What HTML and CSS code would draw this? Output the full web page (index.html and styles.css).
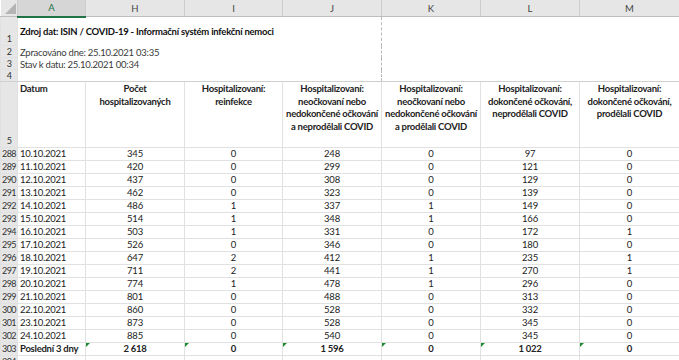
FILE: index.html
```html
<!DOCTYPE html>
<html lang="cs">
<head>
    <meta charset="UTF-8">
    <meta name="viewport" content="width=device-width, initial-scale=1.0">
    <title>Hospitalizovaní - ISIN</title>
    <link rel="stylesheet" href="styles.css">
</head>
<body>

<table class="sheet">
    <colgroup>
        <col class="w-row">
        <col class="w-a">
        <col class="w-h">
        <col class="w-i">
        <col class="w-j">
        <col class="w-k">
        <col class="w-l">
        <col class="w-m">
    </colgroup>
    <thead>
        <tr class="col-heads">
            <th class="corner">
                <svg width="17" height="16" viewBox="0 0 17 16"><polygon points="15,3 15,14 4,14" fill="#b4b4b4"/></svg>
            </th>
            <th class="active">A</th>
            <th>H</th>
            <th>I</th>
            <th>J</th>
            <th>K</th>
            <th>L</th>
            <th>M</th>
        </tr>
    </thead>
    <tbody>
        <tr class="r1">
            <th>1</th>
            <td colspan="4" class="top title">Zdroj dat: ISIN / COVID-19 - Informační systém infekční nemoci</td>
            <td colspan="3" class="top"></td>
        </tr>
        <tr class="r-small">
            <th>2</th>
            <td colspan="4" class="top note">Zpracováno dne: 25.10.2021 03:35</td>
            <td colspan="3" class="top"></td>
        </tr>
        <tr class="r-small">
            <th>3</th>
            <td colspan="4" class="top note">Stav k datu: 25.10.2021 00:34</td>
            <td colspan="3" class="top"></td>
        </tr>
        <tr class="r-small r4">
            <th>4</th>
            <td colspan="4" class="top"></td>
            <td colspan="3" class="top"></td>
        </tr>
        <tr class="r-head">
            <th>5</th>
            <td class="left">Datum</td>
            <td>Počet<br>hospitalizovaných</td>
            <td>Hospitalizovaní:<br>reinfekce</td>
            <td class="brk">Hospitalizovaní:<br>neočkovaní nebo<br>nedokončené očkování<br>a neprodělali COVID</td>
            <td>Hospitalizovaní:<br>neočkovaní nebo<br>nedokončené očkování<br>a prodělali COVID</td>
            <td>Hospitalizovaní:<br>dokončené očkování,<br>neprodělali COVID</td>
            <td class="brk">Hospitalizovaní:<br>dokončené očkování,<br>prodělali COVID</td>
        </tr>
        <tr><th>288</th><td class="left">10.10.2021</td><td>345</td><td>0</td><td class="brk">248</td><td>0</td><td>97</td><td class="brk">0</td></tr>
        <tr><th>289</th><td class="left">11.10.2021</td><td>420</td><td>0</td><td class="brk">299</td><td>0</td><td>121</td><td class="brk">0</td></tr>
        <tr><th>290</th><td class="left">12.10.2021</td><td>437</td><td>0</td><td class="brk">308</td><td>0</td><td>129</td><td class="brk">0</td></tr>
        <tr><th>291</th><td class="left">13.10.2021</td><td>462</td><td>0</td><td class="brk">323</td><td>0</td><td>139</td><td class="brk">0</td></tr>
        <tr><th>292</th><td class="left">14.10.2021</td><td>486</td><td>1</td><td class="brk">337</td><td>1</td><td>149</td><td class="brk">0</td></tr>
        <tr><th>293</th><td class="left">15.10.2021</td><td>514</td><td>1</td><td class="brk">348</td><td>1</td><td>166</td><td class="brk">0</td></tr>
        <tr><th>294</th><td class="left">16.10.2021</td><td>503</td><td>1</td><td class="brk">331</td><td>0</td><td>172</td><td class="brk">1</td></tr>
        <tr><th>295</th><td class="left">17.10.2021</td><td>526</td><td>0</td><td class="brk">346</td><td>0</td><td>180</td><td class="brk">0</td></tr>
        <tr><th>296</th><td class="left">18.10.2021</td><td>647</td><td>2</td><td class="brk">412</td><td>1</td><td>235</td><td class="brk">1</td></tr>
        <tr><th>297</th><td class="left">19.10.2021</td><td>711</td><td>2</td><td class="brk">441</td><td>1</td><td>270</td><td class="brk">1</td></tr>
        <tr><th>298</th><td class="left">20.10.2021</td><td>774</td><td>1</td><td class="brk">478</td><td>1</td><td>296</td><td class="brk">0</td></tr>
        <tr><th>299</th><td class="left">21.10.2021</td><td>801</td><td>0</td><td class="brk">488</td><td>0</td><td>313</td><td class="brk">0</td></tr>
        <tr><th>300</th><td class="left">22.10.2021</td><td>860</td><td>0</td><td class="brk">528</td><td>0</td><td>332</td><td class="brk">0</td></tr>
        <tr><th>301</th><td class="left">23.10.2021</td><td>873</td><td>0</td><td class="brk">528</td><td>0</td><td>345</td><td class="brk">0</td></tr>
        <tr><th>302</th><td class="left">24.10.2021</td><td>885</td><td>0</td><td class="brk">540</td><td>0</td><td>345</td><td class="brk">0</td></tr>
        <tr class="total">
            <th>303</th>
            <td class="left">Poslední 3 dny</td>
            <td class="flag">2 618</td>
            <td class="flag">0</td>
            <td class="flag brk">1 596</td>
            <td class="flag">0</td>
            <td class="flag">1 022</td>
            <td class="flag brk">0</td>
        </tr>
        <tr><th>304</th><td></td><td></td><td></td><td class="brk"></td><td></td><td></td><td class="brk"></td></tr>
    </tbody>
</table>

</body>
</html>
```

FILE: styles.css
```css
body {
    margin: 0;
    padding: 0;
    background-color: white;
    font-family: Lato, "Open Sans", sans-serif;
    color: #222;
    overflow: hidden;
}
.sheet {
    border-collapse: collapse;
    table-layout: fixed;
    width: 679px;
    font-size: 9.5px;
    letter-spacing: -0.25px;
}
.w-row { width: 17px; }
.w-a { width: 68px; }
.w-h { width: 99px; }
.w-i { width: 98px; }
.w-j { width: 99px; }
.w-k { width: 99px; }
.w-l { width: 99px; }
.w-m { width: 100px; }

.sheet td, .sheet th {
    padding: 0 2px;
    border: 1px solid #e1e1e1;
    overflow: hidden;
    white-space: nowrap;
    text-align: center;
    height: 12px;
    line-height: 12px;
}
.sheet td.left {
    text-align: left;
}
.sheet td.brk {
    border-right: 1px dashed #b8b8b8;
}

/* column letters */
.col-heads th {
    height: 15px;
    background-color: #e6e6e6;
    color: #444;
    font-weight: normal;
    border: none;
    border-right: 1px solid #cdcdcd;
    border-bottom: 1px solid #bdbdbd;
    line-height: 15px;
    letter-spacing: 0;
}
.col-heads th.corner {
    padding: 0;
    line-height: 0;
}
.col-heads th.active {
    background-color: #d6d6d6;
    color: #217346;
    border-bottom: 2px solid #217346;
}

/* row numbers */
tbody th {
    background-color: #e6e6e6;
    color: #333;
    font-weight: normal;
    font-size: 9px;
    letter-spacing: -0.5px;
    border-color: #d2d2d2;
    vertical-align: bottom;
}
.sheet tbody th {
    padding: 0;
}

/* top block, rows 1 - 4 */
.sheet td.top {
    border: none;
    border-right: 1px dashed #b8b8b8;
    text-align: left;
    vertical-align: bottom;
}
.r1 th, .r1 td {
    height: 27px;
}
.sheet td.title {
    font-weight: bold;
    color: #111;
    vertical-align: middle;
    padding-top: 1px;
}
.sheet td.note {
    color: #3a3a3a;
}
.r-small th, .r-small td {
    height: 11px;
    line-height: 11px;
}
.r4 th, .r4 td.top {
    border-bottom: 1px solid #cfcfcf;
}

/* column titles, row 5 */
.r-head td {
    height: 64px;
    vertical-align: top;
    font-weight: bold;
    line-height: 12.7px;
    padding-top: 1px;
}

/* sums row */
.total td {
    font-weight: bold;
}
.total td.flag {
    position: relative;
}
.total td.flag::before {
    content: "";
    position: absolute;
    left: 0;
    top: 0;
    border-top: 4px solid #1e8a2e;
    border-right: 4px solid transparent;
}
```
